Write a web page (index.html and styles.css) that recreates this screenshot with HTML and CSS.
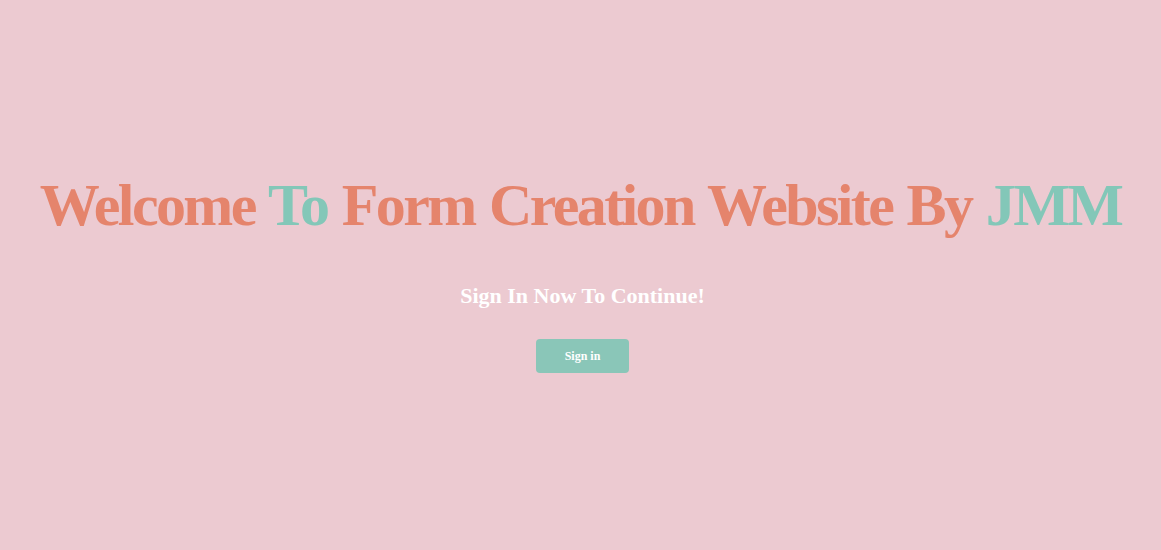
FILE: index.html
```html
<!DOCTYPE html>
<html>
<head>
<meta charset="utf-8">
<link rel="stylesheet" href="styles.css">
</head>
<body>
<main class="hero">
  <h1 class="title"><span class="salmon">Welcome</span> <span class="teal">To</span> <span class="salmon">Form Creation Website By</span> <span class="teal">JMM</span></h1>
  <h2 class="subtitle">Sign In Now To Continue!</h2>
  <button class="btn">Sign in</button>
</main>
</body>
</html>
```
FILE: styles.css
```css
html, body {
  margin: 0;
  padding: 0;
}
body {
  background: #ecCAD1;
  font-family: "Liberation Serif", "Times New Roman", serif;
}
.hero {
  min-height: 100vh;
  box-sizing: border-box;
  padding-bottom: 6px;
  display: flex;
  flex-direction: column;
  align-items: center;
  justify-content: center;
}
.title {
  margin: 0;
  font-size: 60px;
  font-weight: bold;
  letter-spacing: -2.6px;
  word-spacing: 2px;
  line-height: 1.15;
  white-space: nowrap;
}
.salmon { color: #e5846c; }
.teal { color: #83c7b8; }
.subtitle {
  margin: 43px 0 0 4px;
  color: #ffffff;
  font-size: 22px;
  font-weight: bold;
}
.btn {
  margin: 30px 0 0 4px;
  width: 93px;
  height: 34px;
  background: #8ac6b8;
  border: none;
  border-radius: 4px;
  color: #fff;
  font-family: "Liberation Serif", "Times New Roman", serif;
  font-weight: bold;
  font-size: 12px;
}
```
